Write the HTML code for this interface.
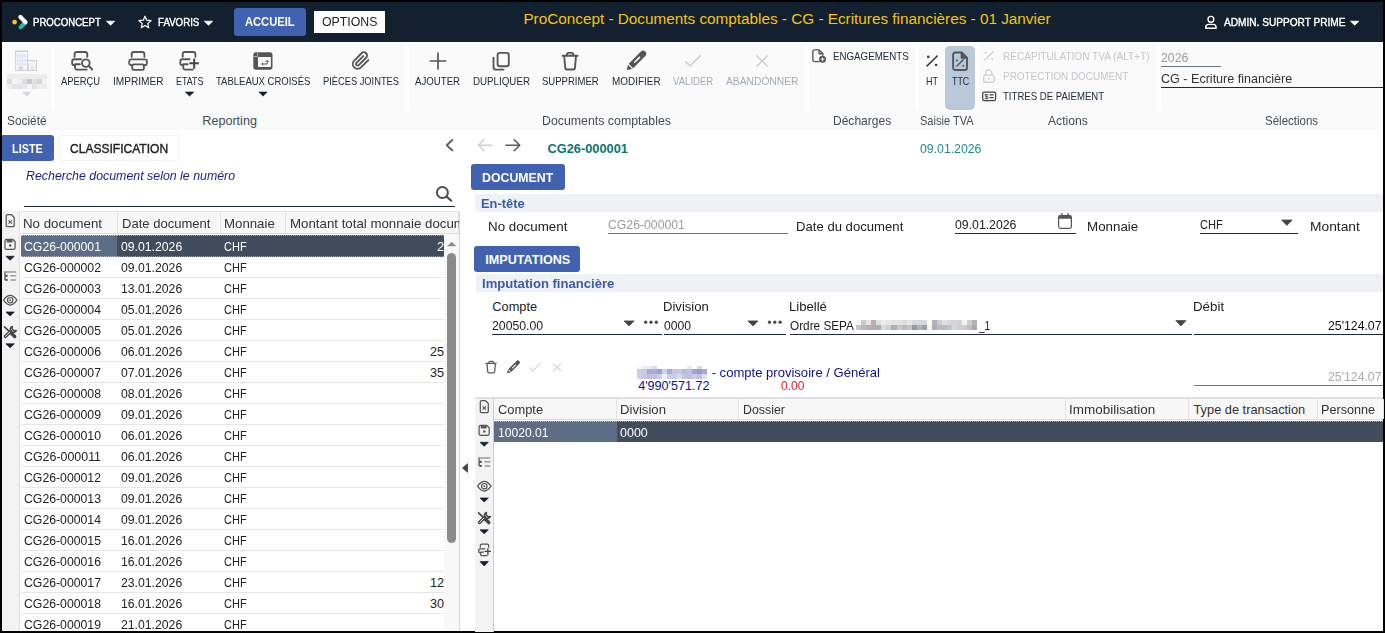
<!DOCTYPE html>
<html lang="fr"><head><meta charset="utf-8"><title>ProConcept - Documents comptables</title>
<style>
html,body{margin:0;padding:0;}
body{width:1385px;height:633px;overflow:hidden;background:#000;font-family:"Liberation Sans", sans-serif;position:relative;}
#app{position:absolute;left:2px;top:2px;width:1381px;height:629px;background:#fff;overflow:hidden;}
#abs{position:absolute;left:0;top:0;width:1385px;height:633px;overflow:hidden;}
.b{position:absolute;}
.t{position:absolute;white-space:pre;line-height:1;transform-origin:0 50%;}

.nav{background:#13202f;}
.blue{background:#4161b1;border-radius:2px;}
.rib{background:#fafafa;}
.sep{background:#fff;}
.band{background:#eef2f6;}
.ul{background:#1e2a3a;height:1px;}
.ulg{background:#6c7682;height:1px;}
.strip{background:#f3f3f3;}
.hd{background:#f7f7f7;border-right:1px solid #e2e2e2;box-sizing:border-box;}
.rl{background:#e6e6e6;height:1px;}
.sel{background:#414c5d;}
.sel1{background:#5c6d85;}
.px{position:absolute;}

</style></head><body>
<div id="app"></div>
<div id="abs">
<div class="b nav" style="left:2px;top:2px;width:1381px;height:40px;"></div>
<div class="b blue" style="left:234px;top:8px;width:72px;height:27.5px;border-radius:3px;"></div>
<div class="b " style="left:314px;top:11px;width:71px;height:22px;background:#fff;"></div>
<div class="b rib" style="left:2px;top:42px;width:1381px;height:88px;"></div>
<div class="b sep" style="left:2px;top:42px;width:1381px;height:1.5px;"></div>
<div class="b sep" style="left:51.2px;top:43px;width:3.8px;height:67px;"></div>
<div class="b sep" style="left:405.1px;top:43px;width:3.8px;height:67px;"></div>
<div class="b sep" style="left:805px;top:43px;width:3.8px;height:67px;"></div>
<div class="b sep" style="left:915px;top:43px;width:3.8px;height:67px;"></div>
<div class="b sep" style="left:975.3px;top:43px;width:3.8px;height:67px;"></div>
<div class="b sep" style="left:1156.8px;top:43px;width:3.8px;height:67px;"></div>
<div class="b " style="left:945px;top:46px;width:30px;height:64px;background:#b9c9d9;border-radius:5px;"></div>
<div class="b ulg" style="left:1161px;top:66px;width:60px;height:1px;"></div>
<div class="b ul" style="left:1161px;top:87px;width:222px;height:1px;"></div>
<div class="b blue" style="left:2px;top:135px;width:52px;height:26px;border-radius:0 3px 3px 0;"></div>
<div class="b " style="left:59px;top:135px;width:120px;height:26px;background:#fff;border:1.5px solid #f3f3f3;box-sizing:border-box;border-radius:2px;"></div>
<div class="b ul" style="left:24px;top:206px;width:430.8px;height:1px;"></div>
<div class="b strip" style="left:2px;top:211px;width:17.7px;height:420px;"></div>
<div class="b " style="left:19.7px;top:210.9px;width:440px;height:1.6px;background:#dfe3e8;"></div>
<div class="b " style="left:19.4px;top:211px;width:1px;height:420px;background:#dedede;"></div>
<div class="b " style="left:459px;top:211px;width:1px;height:420px;background:#cfd6df;"></div>
<div class="b hd" style="left:20.5px;top:212px;width:97px;height:21.5px;"></div>
<div class="b hd" style="left:117.5px;top:212px;width:103px;height:21.5px;"></div>
<div class="b hd" style="left:220.5px;top:212px;width:65px;height:21.5px;"></div>
<div class="b hd" style="left:285.5px;top:212px;width:173.5px;height:21.5px;"></div>
<div class="b " style="left:20.5px;top:233.3px;width:438.5px;height:1px;background:#dcdcdc;"></div>
<div class="b " style="left:286px;top:212px;width:173px;height:21px;overflow:hidden;"><span class="t" style="left:4.3px;top:6px;font-size:12.8px;color:#333;transform:scaleX(1.037)">Montant total monnaie document</span></div>
<div class="b sel" style="left:20.5px;top:235px;width:423.5px;height:22px;border-top:1px dotted #9aa3b0;border-bottom:1px dotted #9aa3b0;box-sizing:border-box;"></div>
<div class="b sel1" style="left:20.5px;top:235px;width:96.5px;height:22px;border-top:1px dotted #b5bcc8;border-bottom:1px dotted #b5bcc8;box-sizing:border-box;"></div>
<div class="b rl" style="left:20.5px;top:277px;width:423.5px;height:1px;"></div>
<div class="b rl" style="left:20.5px;top:298px;width:423.5px;height:1px;"></div>
<div class="b rl" style="left:20.5px;top:319px;width:423.5px;height:1px;"></div>
<div class="b rl" style="left:20.5px;top:340px;width:423.5px;height:1px;"></div>
<div class="b rl" style="left:20.5px;top:361px;width:423.5px;height:1px;"></div>
<div class="b rl" style="left:20.5px;top:382px;width:423.5px;height:1px;"></div>
<div class="b rl" style="left:20.5px;top:403px;width:423.5px;height:1px;"></div>
<div class="b rl" style="left:20.5px;top:424px;width:423.5px;height:1px;"></div>
<div class="b rl" style="left:20.5px;top:445px;width:423.5px;height:1px;"></div>
<div class="b rl" style="left:20.5px;top:466px;width:423.5px;height:1px;"></div>
<div class="b rl" style="left:20.5px;top:487px;width:423.5px;height:1px;"></div>
<div class="b rl" style="left:20.5px;top:508px;width:423.5px;height:1px;"></div>
<div class="b rl" style="left:20.5px;top:529px;width:423.5px;height:1px;"></div>
<div class="b rl" style="left:20.5px;top:550px;width:423.5px;height:1px;"></div>
<div class="b rl" style="left:20.5px;top:571px;width:423.5px;height:1px;"></div>
<div class="b rl" style="left:20.5px;top:592px;width:423.5px;height:1px;"></div>
<div class="b rl" style="left:20.5px;top:613px;width:423.5px;height:1px;"></div>
<div class="b rl" style="left:20.5px;top:634px;width:423.5px;height:1px;"></div>
<div class="b " style="left:444.2px;top:234.3px;width:14.8px;height:397px;background:#f8f8f8;"></div>
<div class="b " style="left:447.3px;top:253px;width:9px;height:290px;background:#8b8b8b;border-radius:4.5px;"></div>
<div class="b blue" style="left:471px;top:164px;width:94px;height:26px;border-radius:3px;"></div>
<div class="b band" style="left:474.5px;top:194px;width:908.5px;height:18px;"></div>
<div class="b ulg" style="left:608px;top:233px;width:180px;height:1px;"></div>
<div class="b ul" style="left:955px;top:233px;width:120.8px;height:1px;"></div>
<div class="b ul" style="left:1200px;top:233px;width:97.6px;height:1px;"></div>
<div class="b blue" style="left:474px;top:246px;width:106px;height:26px;border-radius:3px;"></div>
<div class="b band" style="left:475.5px;top:274px;width:907.5px;height:18px;"></div>
<div class="b ul" style="left:492px;top:334px;width:169.7px;height:1.2px;"></div>
<div class="b ul" style="left:664px;top:334px;width:122px;height:1.2px;"></div>
<div class="b ul" style="left:789.8px;top:334px;width:402px;height:1.2px;"></div>
<div class="b ul" style="left:1194px;top:334px;width:189px;height:1.2px;"></div>
<div class="b ulg" style="left:1194px;top:384.8px;width:189px;height:1px;"></div>
<div class="b " style="left:7px;top:74px;width:40px;height:14.700000000000001px;filter:blur(.35px);"><i class="px" style="left:0px;top:0px;width:5.2px;height:5.1px;background:#ededee"></i><i class="px" style="left:5px;top:0px;width:5.2px;height:5.1px;background:#ededee"></i><i class="px" style="left:10px;top:0px;width:5.2px;height:5.1px;background:#ededee"></i><i class="px" style="left:15px;top:0px;width:5.2px;height:5.1px;background:#ededee"></i><i class="px" style="left:20px;top:0px;width:5.2px;height:5.1px;background:#ededee"></i><i class="px" style="left:25px;top:0px;width:5.2px;height:5.1px;background:#ededee"></i><i class="px" style="left:30px;top:0px;width:5.2px;height:5.1px;background:#ededee"></i><i class="px" style="left:35px;top:0px;width:5.2px;height:5.1px;background:#ededee"></i><i class="px" style="left:0px;top:4.9px;width:5.2px;height:5.1px;background:#dcdde0"></i><i class="px" style="left:5px;top:4.9px;width:5.2px;height:5.1px;background:#f5f5f5"></i><i class="px" style="left:10px;top:4.9px;width:5.2px;height:5.1px;background:#efefef"></i><i class="px" style="left:15px;top:4.9px;width:5.2px;height:5.1px;background:#dcdde0"></i><i class="px" style="left:20px;top:4.9px;width:5.2px;height:5.1px;background:#c5c9d1"></i><i class="px" style="left:25px;top:4.9px;width:5.2px;height:5.1px;background:#dfe0e3"></i><i class="px" style="left:30px;top:4.9px;width:5.2px;height:5.1px;background:#d5d7dc"></i><i class="px" style="left:35px;top:4.9px;width:5.2px;height:5.1px;background:#f3f3f3"></i><i class="px" style="left:0px;top:9.8px;width:5.2px;height:5.1px;background:#f0f0f0"></i><i class="px" style="left:5px;top:9.8px;width:5.2px;height:5.1px;background:#e3e4e6"></i><i class="px" style="left:10px;top:9.8px;width:5.2px;height:5.1px;background:#e3e4e6"></i><i class="px" style="left:15px;top:9.8px;width:5.2px;height:5.1px;background:#e8e8ea"></i><i class="px" style="left:20px;top:9.8px;width:5.2px;height:5.1px;background:#f4f4f4"></i><i class="px" style="left:25px;top:9.8px;width:5.2px;height:5.1px;background:#e3e4e6"></i><i class="px" style="left:30px;top:9.8px;width:5.2px;height:5.1px;background:#efefef"></i><i class="px" style="left:35px;top:9.8px;width:5.2px;height:5.1px;background:#ededee"></i></div>
<div class="b " style="left:637px;top:365.9px;width:70px;height:3.2px;filter:blur(.35px);"><i class="px" style="left:0px;top:0px;width:5.2px;height:3.4px;background:#fbf5f5"></i><i class="px" style="left:5px;top:0px;width:5.2px;height:3.4px;background:#e8ecf9"></i><i class="px" style="left:10px;top:0px;width:5.2px;height:3.4px;background:#ebebf5"></i><i class="px" style="left:15px;top:0px;width:5.2px;height:3.4px;background:#ded9ea"></i><i class="px" style="left:50px;top:0px;width:5.2px;height:3.4px;background:#e6e6f2"></i><i class="px" style="left:60px;top:0px;width:5.2px;height:3.4px;background:#d8d8e8"></i></div>
<div class="b " style="left:637px;top:369.1px;width:70px;height:9.8px;filter:blur(.35px);"><i class="px" style="left:0px;top:0px;width:5.2px;height:5.1px;background:#cfcbe0"></i><i class="px" style="left:5px;top:0px;width:5.2px;height:5.1px;background:#c9cde3"></i><i class="px" style="left:10px;top:0px;width:5.2px;height:5.1px;background:#aea8d0"></i><i class="px" style="left:15px;top:0px;width:5.2px;height:5.1px;background:#a9acd5"></i><i class="px" style="left:20px;top:0px;width:5.2px;height:5.1px;background:#a7a0cc"></i><i class="px" style="left:25px;top:0px;width:5.2px;height:5.1px;background:#c9d4ee"></i><i class="px" style="left:30px;top:0px;width:5.2px;height:5.1px;background:#ada9d3"></i><i class="px" style="left:35px;top:0px;width:5.2px;height:5.1px;background:#c8c6de"></i><i class="px" style="left:40px;top:0px;width:5.2px;height:5.1px;background:#cbc7dc"></i><i class="px" style="left:45px;top:0px;width:5.2px;height:5.1px;background:#b3bfe2"></i><i class="px" style="left:50px;top:0px;width:5.2px;height:5.1px;background:#c9bdd6"></i><i class="px" style="left:55px;top:0px;width:5.2px;height:5.1px;background:#9ca5d5"></i><i class="px" style="left:60px;top:0px;width:5.2px;height:5.1px;background:#a399c8"></i><i class="px" style="left:65px;top:0px;width:5.2px;height:5.1px;background:#a3abd8"></i><i class="px" style="left:0px;top:4.9px;width:5.2px;height:5.1px;background:#d3cfe4"></i><i class="px" style="left:5px;top:4.9px;width:5.2px;height:5.1px;background:#c2c8e6"></i><i class="px" style="left:10px;top:4.9px;width:5.2px;height:5.1px;background:#c4bedd"></i><i class="px" style="left:15px;top:4.9px;width:5.2px;height:5.1px;background:#bcc2e3"></i><i class="px" style="left:20px;top:4.9px;width:5.2px;height:5.1px;background:#d4cde2"></i><i class="px" style="left:25px;top:4.9px;width:5.2px;height:5.1px;background:#eef1fb"></i><i class="px" style="left:30px;top:4.9px;width:5.2px;height:5.1px;background:#d3cbe0"></i><i class="px" style="left:35px;top:4.9px;width:5.2px;height:5.1px;background:#c5cce8"></i><i class="px" style="left:40px;top:4.9px;width:5.2px;height:5.1px;background:#dcdaea"></i><i class="px" style="left:45px;top:4.9px;width:5.2px;height:5.1px;background:#c0c7e5"></i><i class="px" style="left:50px;top:4.9px;width:5.2px;height:5.1px;background:#c3bcd9"></i><i class="px" style="left:55px;top:4.9px;width:5.2px;height:5.1px;background:#c7cbe6"></i><i class="px" style="left:60px;top:4.9px;width:5.2px;height:5.1px;background:#c8bfda"></i><i class="px" style="left:65px;top:4.9px;width:5.2px;height:5.1px;background:#dde0f1"></i></div>
<div class="b " style="left:856.2px;top:320px;width:120.96000000000001px;height:9.9px;filter:blur(.35px);"><i class="px" style="left:0px;top:0px;width:5.24px;height:5.15px;background:#fbf3ec"></i><i class="px" style="left:5.04px;top:0px;width:5.24px;height:5.15px;background:#c6cbd8"></i><i class="px" style="left:10.08px;top:0px;width:5.24px;height:5.15px;background:#e6e3e1"></i><i class="px" style="left:15.12px;top:0px;width:5.24px;height:5.15px;background:#b9adb6"></i><i class="px" style="left:20.16px;top:0px;width:5.24px;height:5.15px;background:#dde3e1"></i><i class="px" style="left:25.2px;top:0px;width:5.24px;height:5.15px;background:#e8ecf0"></i><i class="px" style="left:30.24px;top:0px;width:5.24px;height:5.15px;background:#e9e6e4"></i><i class="px" style="left:35.28px;top:0px;width:5.24px;height:5.15px;background:#e3e3e5"></i><i class="px" style="left:40.32px;top:0px;width:5.24px;height:5.15px;background:#dfe2e6"></i><i class="px" style="left:45.36px;top:0px;width:5.24px;height:5.15px;background:#dedbdc"></i><i class="px" style="left:50.4px;top:0px;width:5.24px;height:5.15px;background:#e6e5e0"></i><i class="px" style="left:55.44px;top:0px;width:5.24px;height:5.15px;background:#d3d8df"></i><i class="px" style="left:60.48px;top:0px;width:5.24px;height:5.15px;background:#ded8d7"></i><i class="px" style="left:65.52px;top:0px;width:5.24px;height:5.15px;background:#d4d9df"></i><i class="px" style="left:70.56px;top:0px;width:5.24px;height:5.15px;background:#fffaf0"></i><i class="px" style="left:75.6px;top:0px;width:5.24px;height:5.15px;background:#b1b1bb"></i><i class="px" style="left:80.64px;top:0px;width:5.24px;height:5.15px;background:#c9cdcf"></i><i class="px" style="left:85.68px;top:0px;width:5.24px;height:5.15px;background:#e0e2e8"></i><i class="px" style="left:90.72px;top:0px;width:5.24px;height:5.15px;background:#d9d7d6"></i><i class="px" style="left:95.76px;top:0px;width:5.24px;height:5.15px;background:#d6d6d8"></i><i class="px" style="left:100.8px;top:0px;width:5.24px;height:5.15px;background:#d3d3d5"></i><i class="px" style="left:105.84px;top:0px;width:5.24px;height:5.15px;background:#f4f0ec"></i><i class="px" style="left:110.88px;top:0px;width:5.24px;height:5.15px;background:#cbcdd0"></i><i class="px" style="left:115.92px;top:0px;width:5.24px;height:5.15px;background:#b9b0b3"></i><i class="px" style="left:0px;top:4.95px;width:5.24px;height:5.15px;background:#c9c6c6"></i><i class="px" style="left:5.04px;top:4.95px;width:5.24px;height:5.15px;background:#b6b8c0"></i><i class="px" style="left:10.08px;top:4.95px;width:5.24px;height:5.15px;background:#baadb0"></i><i class="px" style="left:15.12px;top:4.95px;width:5.24px;height:5.15px;background:#b1adb9"></i><i class="px" style="left:20.16px;top:4.95px;width:5.24px;height:5.15px;background:#aab1ac"></i><i class="px" style="left:25.2px;top:4.95px;width:5.24px;height:5.15px;background:#d3d9e4"></i><i class="px" style="left:30.24px;top:4.95px;width:5.24px;height:5.15px;background:#d3cfc6"></i><i class="px" style="left:35.28px;top:4.95px;width:5.24px;height:5.15px;background:#a9b0bb"></i><i class="px" style="left:40.32px;top:4.95px;width:5.24px;height:5.15px;background:#c3c9c8"></i><i class="px" style="left:45.36px;top:4.95px;width:5.24px;height:5.15px;background:#bdbbc8"></i><i class="px" style="left:50.4px;top:4.95px;width:5.24px;height:5.15px;background:#cdc3bd"></i><i class="px" style="left:55.44px;top:4.95px;width:5.24px;height:5.15px;background:#8f9cab"></i><i class="px" style="left:60.48px;top:4.95px;width:5.24px;height:5.15px;background:#bfaeaa"></i><i class="px" style="left:65.52px;top:4.95px;width:5.24px;height:5.15px;background:#95a3b1"></i><i class="px" style="left:70.56px;top:4.95px;width:5.24px;height:5.15px;background:#fdf3e8"></i><i class="px" style="left:75.6px;top:4.95px;width:5.24px;height:5.15px;background:#adadb9"></i><i class="px" style="left:80.64px;top:4.95px;width:5.24px;height:5.15px;background:#b9bdbf"></i><i class="px" style="left:85.68px;top:4.95px;width:5.24px;height:5.15px;background:#b6b9c5"></i><i class="px" style="left:90.72px;top:4.95px;width:5.24px;height:5.15px;background:#c7c5c4"></i><i class="px" style="left:95.76px;top:4.95px;width:5.24px;height:5.15px;background:#d3d7de"></i><i class="px" style="left:100.8px;top:4.95px;width:5.24px;height:5.15px;background:#cfcfd1"></i><i class="px" style="left:105.84px;top:4.95px;width:5.24px;height:5.15px;background:#d0ccc9"></i><i class="px" style="left:110.88px;top:4.95px;width:5.24px;height:5.15px;background:#bdc1c3"></i><i class="px" style="left:115.92px;top:4.95px;width:5.24px;height:5.15px;background:#b3a7a8"></i></div>
<div class="b strip" style="left:475.2px;top:397.5px;width:18.3px;height:234px;"></div>
<div class="b " style="left:475.2px;top:397.3px;width:908px;height:1.4px;background:#dde1e5;"></div>
<div class="b " style="left:493.3px;top:397.5px;width:1px;height:234px;background:#c9cdd2;"></div>
<div class="b hd" style="left:494.3px;top:398.7px;width:122.4px;height:20.6px;"></div>
<div class="b hd" style="left:616.7px;top:398.7px;width:122.8px;height:20.6px;"></div>
<div class="b hd" style="left:739.5px;top:398.7px;width:326.5px;height:20.6px;"></div>
<div class="b hd" style="left:1066px;top:398.7px;width:123px;height:20.6px;"></div>
<div class="b hd" style="left:1189px;top:398.7px;width:128.5px;height:20.6px;"></div>
<div class="b hd" style="left:1317.5px;top:398.7px;width:66px;height:20.6px;"></div>
<div class="b " style="left:494.3px;top:419.3px;width:889px;height:1px;background:#dcdcdc;"></div>
<div class="b sel" style="left:494.3px;top:421px;width:889px;height:21px;border-top:1px dotted #9aa3b0;box-sizing:border-box;"></div>
<div class="b sel1" style="left:494.3px;top:421px;width:122.4px;height:21px;border-top:1px dotted #b5bcc8;box-sizing:border-box;"></div>
<span class="t" style="top:17px;font-size:11px;color:#fff;-webkit-text-stroke:.4px #fff;left:33.00px;transform:scaleX(0.8729);">PROCONCEPT</span>
<span class="t" style="top:17px;font-size:11px;color:#fff;-webkit-text-stroke:.4px #fff;left:158.00px;transform:scaleX(0.8812);">FAVORIS</span>
<span class="t" style="top:16px;font-size:12.4px;color:#fff;font-weight:700;left:245.20px;transform:scaleX(0.9009);">ACCUEIL</span>
<span class="t" style="top:16px;font-size:12.4px;color:#222;left:321.80px;transform:scaleX(0.9946);">OPTIONS</span>
<span class="t" style="top:11px;font-size:15.3px;color:#f6c40f;left:523.40px;">ProConcept - Documents comptables - CG - Ecritures financières - 01 Janvier</span>
<span class="t" style="top:17px;font-size:11px;color:#fff;-webkit-text-stroke:.4px #fff;left:1224.00px;transform:scaleX(0.9183);">ADMIN. SUPPORT PRIME</span>
<span class="t" style="top:76px;font-size:11.2px;color:#222c3b;left:61.10px;transform:scaleX(0.8379);">APERÇU</span>
<span class="t" style="top:76px;font-size:11.2px;color:#222c3b;left:112.50px;transform:scaleX(0.9041);">IMPRIMER</span>
<span class="t" style="top:76px;font-size:11.2px;color:#222c3b;left:175.80px;transform:scaleX(0.7987);">ETATS</span>
<span class="t" style="top:76px;font-size:11.2px;color:#222c3b;left:216.10px;transform:scaleX(0.8498);">TABLEAUX CROISÉS</span>
<span class="t" style="top:76px;font-size:11.2px;color:#222c3b;left:322.70px;transform:scaleX(0.8315);">PIÈCES JOINTES</span>
<span class="t" style="top:76px;font-size:11.2px;color:#222c3b;left:415.30px;transform:scaleX(0.8632);">AJOUTER</span>
<span class="t" style="top:76px;font-size:11.2px;color:#222c3b;left:472.90px;transform:scaleX(0.8728);">DUPLIQUER</span>
<span class="t" style="top:76px;font-size:11.2px;color:#222c3b;left:542.20px;transform:scaleX(0.8520);">SUPPRIMER</span>
<span class="t" style="top:76px;font-size:11.2px;color:#222c3b;left:611.70px;transform:scaleX(0.8881);">MODIFIER</span>
<span class="t" style="top:76px;font-size:11.2px;color:#a3abb4;left:673.10px;transform:scaleX(0.8560);">VALIDER</span>
<span class="t" style="top:76px;font-size:11.2px;color:#a3abb4;left:726.20px;transform:scaleX(0.9180);">ABANDONNER</span>
<span class="t" style="top:76px;font-size:11.2px;color:#222c3b;left:925.90px;transform:scaleX(0.8024);">HT</span>
<span class="t" style="top:76px;font-size:11.2px;color:#222c3b;left:951.60px;transform:scaleX(0.7938);">TTC</span>
<span class="t" style="top:51px;font-size:11.2px;color:#222c3b;left:832.60px;transform:scaleX(0.8710);">ENGAGEMENTS</span>
<span class="t" style="top:51px;font-size:11.2px;color:#c3c8cd;left:1002.50px;transform:scaleX(0.8990);">RÉCAPITULATION TVA (ALT+T)</span>
<span class="t" style="top:71px;font-size:11.2px;color:#c3c8cd;left:1002.50px;transform:scaleX(0.8885);">PROTECTION DOCUMENT</span>
<span class="t" style="top:91px;font-size:11.2px;color:#222c3b;left:1002.50px;transform:scaleX(0.8572);">TITRES DE PAIEMENT</span>
<span class="t" style="top:51px;font-size:13.2px;color:#9a9a9a;left:1161.40px;transform:scaleX(0.9309);">2026</span>
<span class="t" style="top:72px;font-size:13.2px;color:#333;left:1161.40px;transform:scaleX(0.9524);">CG - Ecriture financière</span>
<span class="t" style="top:115px;font-size:12.6px;color:#444b55;left:6.50px;transform:scaleX(0.9404);">Société</span>
<span class="t" style="top:115px;font-size:12.6px;color:#444b55;left:202.30px;">Reporting</span>
<span class="t" style="top:115px;font-size:12.6px;color:#444b55;left:542.32px;transform:scaleX(0.9801);">Documents comptables</span>
<span class="t" style="top:115px;font-size:12.6px;color:#444b55;left:832.95px;transform:scaleX(0.9546);">Décharges</span>
<span class="t" style="top:115px;font-size:12.6px;color:#444b55;left:919.90px;transform:scaleX(0.8764);">Saisie TVA</span>
<span class="t" style="top:115px;font-size:12.6px;color:#444b55;left:1048.10px;transform:scaleX(0.9634);">Actions</span>
<span class="t" style="top:115px;font-size:12.6px;color:#444b55;left:1264.50px;transform:scaleX(0.9134);">Sélections</span>
<span class="t" style="top:143px;font-size:12.6px;color:#fff;font-weight:700;left:12.10px;transform:scaleX(0.8616);">LISTE</span>
<span class="t" style="top:143px;font-size:12.6px;color:#222;-webkit-text-stroke:.4px #222;left:70.00px;transform:scaleX(0.9558);">CLASSIFICATION</span>
<span class="t" style="top:170px;font-size:12.8px;color:#1c1c8c;font-style:italic;left:26.00px;transform:scaleX(0.9670);">Recherche document selon le numéro</span>
<span class="t" style="top:218px;font-size:12.8px;color:#333;left:23.46px;transform:scaleX(1.0376);">No document</span>
<span class="t" style="top:218px;font-size:12.8px;color:#333;left:121.58px;transform:scaleX(1.0194);">Date document</span>
<span class="t" style="top:218px;font-size:12.8px;color:#333;left:224.37px;transform:scaleX(1.0340);">Monnaie</span>
<span class="t" style="top:241px;font-size:12.6px;color:#fff;left:23.60px;transform:scaleX(0.9733);">CG26-000001</span>
<span class="t" style="top:241px;font-size:12.6px;color:#fff;left:121.40px;transform:scaleX(0.9710);">09.01.2026</span>
<span class="t" style="top:241px;font-size:12.6px;color:#fff;left:224.30px;transform:scaleX(0.8744);">CHF</span>
<span class="t" style="top:241px;font-size:12.6px;color:#fff;right:941.08px;transform-origin:100% 50%;">2</span>
<span class="t" style="top:262px;font-size:12.6px;color:#222;left:23.60px;transform:scaleX(0.9733);">CG26-000002</span>
<span class="t" style="top:262px;font-size:12.6px;color:#222;left:121.40px;transform:scaleX(0.9710);">09.01.2026</span>
<span class="t" style="top:262px;font-size:12.6px;color:#222;left:224.30px;transform:scaleX(0.8744);">CHF</span>
<span class="t" style="top:283px;font-size:12.6px;color:#222;left:23.60px;transform:scaleX(0.9733);">CG26-000003</span>
<span class="t" style="top:283px;font-size:12.6px;color:#222;left:121.40px;transform:scaleX(0.9710);">13.01.2026</span>
<span class="t" style="top:283px;font-size:12.6px;color:#222;left:224.30px;transform:scaleX(0.8744);">CHF</span>
<span class="t" style="top:304px;font-size:12.6px;color:#222;left:23.60px;transform:scaleX(0.9733);">CG26-000004</span>
<span class="t" style="top:304px;font-size:12.6px;color:#222;left:121.40px;transform:scaleX(0.9710);">05.01.2026</span>
<span class="t" style="top:304px;font-size:12.6px;color:#222;left:224.30px;transform:scaleX(0.8744);">CHF</span>
<span class="t" style="top:325px;font-size:12.6px;color:#222;left:23.60px;transform:scaleX(0.9733);">CG26-000005</span>
<span class="t" style="top:325px;font-size:12.6px;color:#222;left:121.40px;transform:scaleX(0.9710);">05.01.2026</span>
<span class="t" style="top:325px;font-size:12.6px;color:#222;left:224.30px;transform:scaleX(0.8744);">CHF</span>
<span class="t" style="top:346px;font-size:12.6px;color:#222;left:23.60px;transform:scaleX(0.9733);">CG26-000006</span>
<span class="t" style="top:346px;font-size:12.6px;color:#222;left:121.40px;transform:scaleX(0.9710);">06.01.2026</span>
<span class="t" style="top:346px;font-size:12.6px;color:#222;left:224.30px;transform:scaleX(0.8744);">CHF</span>
<span class="t" style="top:346px;font-size:12.6px;color:#222;right:940.99px;transform-origin:100% 50%;">25</span>
<span class="t" style="top:367px;font-size:12.6px;color:#222;left:23.60px;transform:scaleX(0.9733);">CG26-000007</span>
<span class="t" style="top:367px;font-size:12.6px;color:#222;left:121.40px;transform:scaleX(0.9710);">07.01.2026</span>
<span class="t" style="top:367px;font-size:12.6px;color:#222;left:224.30px;transform:scaleX(0.8744);">CHF</span>
<span class="t" style="top:367px;font-size:12.6px;color:#222;right:940.99px;transform-origin:100% 50%;">35</span>
<span class="t" style="top:388px;font-size:12.6px;color:#222;left:23.60px;transform:scaleX(0.9733);">CG26-000008</span>
<span class="t" style="top:388px;font-size:12.6px;color:#222;left:121.40px;transform:scaleX(0.9710);">08.01.2026</span>
<span class="t" style="top:388px;font-size:12.6px;color:#222;left:224.30px;transform:scaleX(0.8744);">CHF</span>
<span class="t" style="top:409px;font-size:12.6px;color:#222;left:23.60px;transform:scaleX(0.9733);">CG26-000009</span>
<span class="t" style="top:409px;font-size:12.6px;color:#222;left:121.40px;transform:scaleX(0.9710);">09.01.2026</span>
<span class="t" style="top:409px;font-size:12.6px;color:#222;left:224.30px;transform:scaleX(0.8744);">CHF</span>
<span class="t" style="top:430px;font-size:12.6px;color:#222;left:23.60px;transform:scaleX(0.9733);">CG26-000010</span>
<span class="t" style="top:430px;font-size:12.6px;color:#222;left:121.40px;transform:scaleX(0.9710);">06.01.2026</span>
<span class="t" style="top:430px;font-size:12.6px;color:#222;left:224.30px;transform:scaleX(0.8744);">CHF</span>
<span class="t" style="top:451px;font-size:12.6px;color:#222;left:23.60px;transform:scaleX(0.9849);">CG26-000011</span>
<span class="t" style="top:451px;font-size:12.6px;color:#222;left:121.40px;transform:scaleX(0.9710);">06.01.2026</span>
<span class="t" style="top:451px;font-size:12.6px;color:#222;left:224.30px;transform:scaleX(0.8744);">CHF</span>
<span class="t" style="top:472px;font-size:12.6px;color:#222;left:23.60px;transform:scaleX(0.9733);">CG26-000012</span>
<span class="t" style="top:472px;font-size:12.6px;color:#222;left:121.40px;transform:scaleX(0.9710);">09.01.2026</span>
<span class="t" style="top:472px;font-size:12.6px;color:#222;left:224.30px;transform:scaleX(0.8744);">CHF</span>
<span class="t" style="top:493px;font-size:12.6px;color:#222;left:23.60px;transform:scaleX(0.9733);">CG26-000013</span>
<span class="t" style="top:493px;font-size:12.6px;color:#222;left:121.40px;transform:scaleX(0.9710);">09.01.2026</span>
<span class="t" style="top:493px;font-size:12.6px;color:#222;left:224.30px;transform:scaleX(0.8744);">CHF</span>
<span class="t" style="top:514px;font-size:12.6px;color:#222;left:23.60px;transform:scaleX(0.9733);">CG26-000014</span>
<span class="t" style="top:514px;font-size:12.6px;color:#222;left:121.40px;transform:scaleX(0.9710);">09.01.2026</span>
<span class="t" style="top:514px;font-size:12.6px;color:#222;left:224.30px;transform:scaleX(0.8744);">CHF</span>
<span class="t" style="top:535px;font-size:12.6px;color:#222;left:23.60px;transform:scaleX(0.9733);">CG26-000015</span>
<span class="t" style="top:535px;font-size:12.6px;color:#222;left:121.40px;transform:scaleX(0.9710);">16.01.2026</span>
<span class="t" style="top:535px;font-size:12.6px;color:#222;left:224.30px;transform:scaleX(0.8744);">CHF</span>
<span class="t" style="top:556px;font-size:12.6px;color:#222;left:23.60px;transform:scaleX(0.9733);">CG26-000016</span>
<span class="t" style="top:556px;font-size:12.6px;color:#222;left:121.40px;transform:scaleX(0.9710);">16.01.2026</span>
<span class="t" style="top:556px;font-size:12.6px;color:#222;left:224.30px;transform:scaleX(0.8744);">CHF</span>
<span class="t" style="top:577px;font-size:12.6px;color:#222;left:23.60px;transform:scaleX(0.9733);">CG26-000017</span>
<span class="t" style="top:577px;font-size:12.6px;color:#222;left:121.40px;transform:scaleX(0.9710);">23.01.2026</span>
<span class="t" style="top:577px;font-size:12.6px;color:#222;left:224.30px;transform:scaleX(0.8744);">CHF</span>
<span class="t" style="top:577px;font-size:12.6px;color:#222;right:940.99px;transform-origin:100% 50%;">12</span>
<span class="t" style="top:598px;font-size:12.6px;color:#222;left:23.60px;transform:scaleX(0.9733);">CG26-000018</span>
<span class="t" style="top:598px;font-size:12.6px;color:#222;left:121.40px;transform:scaleX(0.9710);">16.01.2026</span>
<span class="t" style="top:598px;font-size:12.6px;color:#222;left:224.30px;transform:scaleX(0.8744);">CHF</span>
<span class="t" style="top:598px;font-size:12.6px;color:#222;right:940.99px;transform-origin:100% 50%;">30</span>
<span class="t" style="top:619px;font-size:12.6px;color:#222;left:23.60px;transform:scaleX(0.9733);">CG26-000019</span>
<span class="t" style="top:619px;font-size:12.6px;color:#222;left:121.40px;transform:scaleX(0.9710);">21.01.2026</span>
<span class="t" style="top:619px;font-size:12.6px;color:#222;left:224.30px;transform:scaleX(0.8744);">CHF</span>
<span class="t" style="top:143px;font-size:12.8px;color:#0a7672;font-weight:700;left:547.50px;">CG26-000001</span>
<span class="t" style="top:143px;font-size:12.6px;color:#1f8c8c;left:920.40px;transform:scaleX(0.9742);">09.01.2026</span>
<span class="t" style="top:172px;font-size:12.6px;color:#fff;font-weight:700;left:482.30px;transform:scaleX(0.9786);">DOCUMENT</span>
<span class="t" style="top:198px;font-size:12.8px;color:#3b5aa9;font-weight:700;left:480.50px;transform:scaleX(1.0057);">En-tête</span>
<span class="t" style="top:221px;font-size:12.8px;color:#222;left:488.36px;transform:scaleX(1.0429);">No document</span>
<span class="t" style="top:219px;font-size:12.6px;color:#9c9c9c;left:608.30px;transform:scaleX(0.9720);">CG26-000001</span>
<span class="t" style="top:221px;font-size:12.8px;color:#222;left:795.57px;transform:scaleX(1.0258);">Date du document</span>
<span class="t" style="top:219px;font-size:12.6px;color:#222;left:955.10px;transform:scaleX(0.9742);">09.01.2026</span>
<span class="t" style="top:221px;font-size:12.8px;color:#222;left:1087.46px;transform:scaleX(1.0444);">Monnaie</span>
<span class="t" style="top:219px;font-size:12.6px;color:#222;left:1200.30px;transform:scaleX(0.8820);">CHF</span>
<span class="t" style="top:221px;font-size:12.8px;color:#222;left:1310.02px;transform:scaleX(1.0770);">Montant</span>
<span class="t" style="top:254px;font-size:12.6px;color:#fff;font-weight:700;left:485.30px;">IMPUTATIONS</span>
<span class="t" style="top:278px;font-size:12.8px;color:#3b5aa9;font-weight:700;left:481.50px;transform:scaleX(1.0225);">Imputation financière</span>
<span class="t" style="top:301px;font-size:12.8px;color:#222;left:492.30px;">Compte</span>
<span class="t" style="top:301px;font-size:12.8px;color:#222;left:663.18px;transform:scaleX(1.0232);">Division</span>
<span class="t" style="top:301px;font-size:12.8px;color:#222;left:789.08px;transform:scaleX(1.0228);">Libellé</span>
<span class="t" style="top:301px;font-size:12.8px;color:#222;left:1193.36px;transform:scaleX(1.0403);">Débit</span>
<span class="t" style="top:320px;font-size:12.6px;color:#222;left:492.30px;transform:scaleX(0.9729);">20050.00</span>
<span class="t" style="top:320px;font-size:12.6px;color:#222;left:664.20px;transform:scaleX(0.9639);">0000</span>
<span class="t" style="top:320px;font-size:12.6px;color:#222;left:790.10px;transform:scaleX(0.9354);">Ordre SEPA</span>
<span class="t" style="top:320px;font-size:12.6px;color:#222;left:978.69px;transform:scaleX(0.7931);">_1</span>
<span class="t" style="top:320px;font-size:12.6px;color:#111;left:1327.70px;transform:scaleX(0.9740);">25&#x27;124.07</span>
<span class="t" style="top:371px;font-size:12.6px;color:#ababab;left:1327.70px;transform:scaleX(0.9740);">25&#x27;124.07</span>
<span class="t" style="top:367px;font-size:12.8px;color:#12128a;left:707.50px;transform:scaleX(1.0202);"> - compte provisoire / Général</span>
<span class="t" style="top:380px;font-size:12.6px;color:#12128a;left:638.20px;">4&#x27;990&#x27;571.72</span>
<span class="t" style="top:380px;font-size:12.6px;color:#f3161e;left:781.00px;transform:scaleX(0.9548);">0.00</span>
<span class="t" style="top:404px;font-size:12.8px;color:#333;left:498.40px;transform:scaleX(1.0069);">Compte</span>
<span class="t" style="top:404px;font-size:12.8px;color:#333;left:620.17px;transform:scaleX(1.0255);">Division</span>
<span class="t" style="top:404px;font-size:12.8px;color:#333;left:743.33px;transform:scaleX(0.9672);">Dossier</span>
<span class="t" style="top:404px;font-size:12.8px;color:#333;left:1069.45px;transform:scaleX(1.0537);">Immobilisation</span>
<span class="t" style="top:404px;font-size:12.8px;color:#333;left:1193.50px;">Type de transaction</span>
<span class="t" style="top:404px;font-size:12.8px;color:#333;left:1321.01px;transform:scaleX(0.9876);">Personne</span>
<span class="t" style="top:427px;font-size:12.6px;color:#fff;left:498.40px;transform:scaleX(0.9634);">10020.01</span>
<span class="t" style="top:427px;font-size:12.6px;color:#fff;left:620.00px;transform:scaleX(0.9924);">0000</span>
<svg class="b" style="left:0;top:0" width="1385" height="633" viewBox="0 0 1385 633">
<circle cx="14.6" cy="22.1" r="2.4" fill="#f8c617"/>
<path d="M25.1 22.8L20.6 27.3" stroke="#27b7ac" stroke-width="4.2" stroke-linecap="round"/>
<path d="M20.4 17.1L25.5 22.2" stroke="#fff" stroke-width="4.2" stroke-linecap="round"/>
<path d="M106.4 21.2H114.8L110.6 25.2Z" fill="#fff" stroke="#fff" stroke-width=".7" stroke-linejoin="round"/>
<path d="M204.3 21.2H212.7L208.5 25.2Z" fill="#fff" stroke="#fff" stroke-width=".7" stroke-linejoin="round"/>
<path d="M1350.5 21.2H1358.9L1354.7 25.2Z" fill="#fff" stroke="#fff" stroke-width=".7" stroke-linejoin="round"/>
<path d="M145.00 16.20L146.73 20.21L151.09 20.62L147.81 23.51L148.76 27.78L145.00 25.55L141.24 27.78L142.19 23.51L138.91 20.62L143.27 20.21Z" fill="none" stroke="#fff" stroke-width="1.2" stroke-linejoin="round"/>
<g fill="none" stroke="#fff" stroke-width="1.4"><circle cx="1210.9" cy="19.3" r="2.9"/><path d="M1205.7 28.3v-.9a3 3 0 0 1 3-3h4.4a3 3 0 0 1 3 3v.9z" stroke-linejoin="round"/></g>
<rect x="15.4" y="51.2" width="12.2" height="19.3" fill="#eceffb" stroke="#c9d0ee" stroke-width=".9"/><path d="M15 51.3h13" stroke="#c8c8c8" stroke-width="1.1"/><path d="M16 52.9h11M16 58.3h11M16 62.2h11M16 66.2h11" stroke="#fff" stroke-width="1.3"/><path d="M17.8 53.5v12.5M20.2 53.5v12.5M22.7 53.5v12.5M25.2 53.5v12.5" stroke="#d9def5" stroke-width=".9"/><rect x="18.6" y="66.3" width="4.4" height="4.2" fill="#d9d9dc"/><rect x="28" y="60.6" width="8.5" height="9.9" fill="#f1f1f1" stroke="#cacaca" stroke-width="1"/><path d="M28 62.5h8.5" stroke="#fff" stroke-width="1.2"/><rect x="30.4" y="66.6" width="3.4" height="3.9" fill="#dfe3f0"/><path d="M15 70.6h22" stroke="#d6d6d6" stroke-width=".8"/>
<path d="M22.7 92.2H30.7L26.7 96Z" fill="#d6d6d6" stroke="#d6d6d6" stroke-width=".7" stroke-linejoin="round"/>
<path d="M185.4 92.1H193.7L189.55 96.1Z" fill="#16202e" stroke="#16202e" stroke-width=".7" stroke-linejoin="round"/>
<path d="M258.9 92.1H267.2L263.04999999999995 96.1Z" fill="#16202e" stroke="#16202e" stroke-width=".7" stroke-linejoin="round"/>
<g fill="none" stroke="#555" stroke-width="1.85" stroke-linejoin="round" stroke-linecap="round">
<path d="M74.55 56.7V54.2a2.2 2.2 0 0 1 2.2-2.2h8.3a2.2 2.2 0 0 1 2.2 2.2V56.7"/>
<path d="M75.10 65.1h-1a1.9 1.9 0 0 1-1.9-1.9v-2a1.9 1.9 0 0 1 1.9-1.9h7"/>
<path d="M79.90 64.2H75.10v3.5a1.9 1.9 0 0 0 1.9 1.9H86.70"/>
<circle cx="85.85" cy="63.1" r="3.8"/><path d="M88.7 66L92.2 69.5"/>
<path d="M131.70 56.7V54.2a2.2 2.2 0 0 1 2.2-2.2h8.3a2.2 2.2 0 0 1 2.2 2.2V56.7"/>
<path d="M132.25 65.2h-1.1a1.9 1.9 0 0 1-1.9-1.9v-2a1.9 1.9 0 0 1 1.9-1.9h13.8a1.9 1.9 0 0 1 1.9 1.9v2a1.9 1.9 0 0 1-1.9 1.9h-1.1"/>
<rect x="132.25" y="64.3" width="11.6" height="5.6" rx="1.3"/>
<path d="M182.70 56.7V54.2a2.2 2.2 0 0 1 2.2-2.2h8.3a2.2 2.2 0 0 1 2.2 2.2V56.7"/>
<path d="M183.25 65.1h-1a1.9 1.9 0 0 1-1.9-1.9v-2a1.9 1.9 0 0 1 1.9-1.9h7.4"/>
<path d="M187.65 64.2H183.25v3.5a1.9 1.9 0 0 0 1.9 1.9H192.85"/>
<path d="M189.3 63.2H198.8M194.2 58.5V68.8" stroke="#444" stroke-width="2" stroke-linecap="butt"/>
<path transform="translate(351.2 51.2) scale(.8)" stroke-width="2.35" d="M21.44 11.05l-9.19 9.19a6 6 0 0 1-8.49-8.49l9.19-9.19a4 4 0 0 1 5.66 5.66l-9.2 9.19a2 2 0 0 1-2.83-2.83l8.49-8.48"/>
<path d="M430.3 61h15.5M438 53.2v15.7" stroke-width="1.7"/>
<rect x="497.6" y="52.8" width="11.2" height="13.4" rx="2.3"/><path d="M493.5 57.6V67.3a2.3 2.3 0 0 0 2.3 2.3H503.6"/>
<path d="M562.6 55.7H577.6M566.9 55.7V54.5a1.7 1.7 0 0 1 1.7-1.7h3a1.7 1.7 0 0 1 1.7 1.7V55.7M564.2 55.9l1 11.8a2 2 0 0 0 2 1.8h5.8a2 2 0 0 0 2-1.8l1-11.8"/>
</g>
<rect x="253.3" y="52.3" width="19.2" height="17.4" rx="2.6" fill="#555"/><rect x="258" y="56.9" width="12.9" height="10.2" rx=".8" fill="#fafafa"/><path d="M257.6 52.4v4.6M253.4 56.6h4.6" stroke="#b5b5b5" stroke-width=".9"/><path d="M261.8 64h5.4v-3.4M265.7 61.8l1.5-1.6 1.5 1.6M263.2 62.6l-1.5 1.4 1.5 1.4" fill="none" stroke="#555" stroke-width="1"/>
<g transform="translate(636.3 60.6) rotate(-45) scale(1.0)"><path d="M-13.4 0l4.6-3v6z" fill="#555"/><path d="M-7.6 -3.1H9.6a3.1 3.1 0 0 1 0 6.2H-7.6z" fill="#555"/><rect x="-3.2" y="-.8" width="8.6" height="1.6" rx=".8" fill="#fafafa"/></g>
<path d="M685.3 61.3l4.8 4.6 10.8-10.7M756.5 55.5l11.3 11M767.8 55.5l-11.3 11" fill="none" stroke="#cdd1d5" stroke-width="1.6"/>
<g fill="none" stroke="#555" stroke-width="1.35" stroke-linejoin="round"><path d="M819.5 61.6H814.7a1.9 1.9 0 0 1-1.9-1.9V51.8a1.9 1.9 0 0 1 1.9-1.9h4.4l3.7 3.7v2.2"/><path d="M819 50.2v3.5h3.5"/></g><circle cx="822.5" cy="59.3" r="3.5" fill="#555"/><path d="M820.6 59.3h3.8M822.5 57.4v3.8" stroke="#fafafa" stroke-width="1.1"/>
<path d="M926.6 66.3L937.6 55.7" stroke="#444" stroke-width="1.6"/><circle cx="928.3" cy="56.9" r="1.35" fill="#444"/><circle cx="936.1" cy="65" r="1.35" fill="#444"/>
<g fill="none" stroke="#555" stroke-width="1.9" stroke-linejoin="round"><path d="M953.1 54.7a2.2 2.2 0 0 1 2.2-2.2h6.4l5.3 5.3v10a2.2 2.2 0 0 1-2.2 2.2h-9.5a2.2 2.2 0 0 1-2.2-2.2z"/><path d="M961.6 52.6v5.2h5.2z" fill="#555"/><path d="M956.4 66.6L963.8 59.3" stroke-width="1.4"/></g><circle cx="957" cy="60.5" r="1.05" fill="#555"/><circle cx="963.3" cy="65.8" r="1.05" fill="#555"/>
<path d="M984.3 60.3L993.5 51.6" stroke="#cdd1d5" stroke-width="1.4"/><circle cx="985.7" cy="52.7" r="1.15" fill="#cdd1d5"/><circle cx="992.2" cy="59.3" r="1.15" fill="#cdd1d5"/>
<g fill="none" stroke="#cdd1d5" stroke-width="1.4"><rect x="983.7" y="75.1" width="10.4" height="7.2" rx="1.6"/><path d="M985.9 75v-2a3 3 0 0 1 6 0v2"/></g><circle cx="988.9" cy="78.7" r=".95" fill="#cdd1d5"/>
<rect x="982.7" y="92" width="12.9" height="8.5" rx="1.6" fill="none" stroke="#444" stroke-width="1.25"/><path d="M989.6 94.9h4M989.6 97.6h4" stroke="#444" stroke-width="1.1"/><text x="984.4" y="98.9" font-family="Liberation Sans, sans-serif" font-size="7" font-weight="700" fill="#444">$</text>
<g fill="none" stroke-width="1.6" stroke-linecap="round" stroke-linejoin="round"><path d="M452.3 140l-5.6 5.2 5.6 5.2" stroke="#5e5e5e" stroke-width="1.9"/><path d="M491.8 145.2H478.5M484 139.7l-5.6 5.5 5.6 5.5" stroke="#d2d2d2"/><path d="M505.9 145.2H519.7M514.2 139.7l5.6 5.5-5.6 5.5" stroke="#5c5c5c" stroke-width="1.5"/></g>
<circle cx="442.4" cy="192.5" r="5.5" fill="none" stroke="#4d4d4d" stroke-width="2"/><path d="M446.6 196.6l4.7 4.1" stroke="#4d4d4d" stroke-width="2.1" stroke-linecap="round"/>
<rect x="1058.6" y="215.5" width="12.8" height="12.9" rx="1.8" fill="none" stroke="#555" stroke-width="1.2"/><path d="M1058.6 218.8v-1.6a1.8 1.8 0 0 1 1.8-1.8h9.2a1.8 1.8 0 0 1 1.8 1.8v1.6z" fill="#555"/><path d="M1062 213v2.4M1068 213v2.4" stroke="#555" stroke-width="1.3"/>
<path d="M1281.6 220H1292.2L1286.9 225.4Z" fill="#444" stroke="#444" stroke-width=".7" stroke-linejoin="round"/>
<path d="M624 320.9H634.2L629.1 326Z" fill="#444" stroke="#444" stroke-width=".7" stroke-linejoin="round"/>
<path d="M747.8 320.9H758L752.9 326Z" fill="#444" stroke="#444" stroke-width=".7" stroke-linejoin="round"/>
<path d="M1175.8 320.6H1186L1180.9 326Z" fill="#444" stroke="#444" stroke-width=".7" stroke-linejoin="round"/>
<circle cx="645.7" cy="322.2" r="1.6" fill="#444"/>
<circle cx="651" cy="322.2" r="1.6" fill="#444"/>
<circle cx="656.3" cy="322.2" r="1.6" fill="#444"/>
<circle cx="769.5" cy="322.2" r="1.6" fill="#444"/>
<circle cx="774.8" cy="322.2" r="1.6" fill="#444"/>
<circle cx="780.1" cy="322.2" r="1.6" fill="#444"/>
<g fill="none" stroke="#595959" stroke-width="1.25" stroke-linejoin="round" stroke-linecap="round"><path d="M485.9 363.3H496.3M488.9 363.3V362.4a1.1 1.1 0 0 1 1.1-1.1h2.4a1.1 1.1 0 0 1 1.1 1.1V363.3M487 363.5l.7 8a1.4 1.4 0 0 0 1.4 1.3h4.2a1.4 1.4 0 0 0 1.4-1.3l.7-8"/></g>
<g transform="translate(513.4 366.9) rotate(-45) scale(0.66)"><path d="M-13.4 0l4.6-3v6z" fill="#555"/><path d="M-7.6 -3.1H9.6a3.1 3.1 0 0 1 0 6.2H-7.6z" fill="#555"/><rect x="-3.2" y="-.8" width="8.6" height="1.6" rx=".8" fill="#fafafa"/></g>
<path d="M529.2 367.6l3.6 3.4 7.8-7.8M553 363.7l8 7.3M561 363.7l-8 7.3" fill="none" stroke="#d3d5d7" stroke-width="1.15"/>
<path d="M447.1 246.3H456.3L451.7 241.8Z" fill="#8a8a8a"/>
<path d="M467.9 463V472.9L462 467.9Z" fill="#4b3f38"/>
<g transform="translate(0 0)">
<g fill="none" stroke="#555" stroke-width="1.25" stroke-linejoin="round"><path d="M6.2 215.9a1.4 1.4 0 0 1 1.4-1.4h3.6l3 3v7.8a1.4 1.4 0 0 1-1.4 1.4H7.6a1.4 1.4 0 0 1-1.4-1.4z"/><path d="M8.5 220.3l3.4 3.4M11.9 220.3l-3.4 3.4" stroke-width="1.1"/><path d="M5 241a1.7 1.7 0 0 1 1.7-1.7h6l2.4 2.4v6a1.7 1.7 0 0 1-1.7 1.7H6.7a1.7 1.7 0 0 1-1.7-1.7z"/><path d="M7.3 239.8v2h4.6v-2" fill="#555"/><path d="M5 271.4v8.6M5 275.8h2.2M5 279.9h2.2" stroke-width="1.3"/><path d="M4.4 272h11.8M10.4 275.8h5.8M10.4 279.9h5.8" stroke="#9a9a9a" stroke-width="1.5"/><path d="M3.5 300.2q6.7-9.6 13.4 0q-6.7 9.6-13.4 0z"/><circle cx="10.2" cy="300.2" r="2.7" stroke-width="1.2"/></g>
<circle cx="10.2" cy="245.6" r="1.25" fill="#555"/><rect x="5.6" y="274.8" width="2" height="2" fill="#555"/><rect x="5.6" y="278.9" width="2" height="2" fill="#555"/><circle cx="10.2" cy="300.2" r=".9" fill="#555"/>
<path d="M4.5 326.9L10 332.1" stroke="#444" stroke-width="1.7" stroke-linecap="round"/><path d="M11 333.1L14.7 336.6" stroke="#444" stroke-width="3.4" stroke-linecap="round"/><path d="M5.3 336.5L10.6 331.3" stroke="#444" stroke-width="3.2" stroke-linecap="round"/><path d="M5.5 336.3L10 331.9" stroke="#f3f3f3" stroke-width="1" stroke-linecap="round"/><path d="M12.3 326.4a3.1 3.1 0 1 0 4 4l-2.4.3-1.9-1.9z" fill="none" stroke="#444" stroke-width="1.5" stroke-linejoin="round"/>
<path d="M5.9 256.3H14.3L10.100000000000001 260.3Z" fill="#16202e" stroke="#16202e" stroke-width=".7" stroke-linejoin="round"/>
<path d="M5.9 312H14.3L10.100000000000001 316Z" fill="#16202e" stroke="#16202e" stroke-width=".7" stroke-linejoin="round"/>
<path d="M5.9 343.8H14.3L10.100000000000001 347.8Z" fill="#16202e" stroke="#16202e" stroke-width=".7" stroke-linejoin="round"/>
</g>
<g transform="translate(474.1 186)">
<g fill="none" stroke="#555" stroke-width="1.25" stroke-linejoin="round"><path d="M6.2 215.9a1.4 1.4 0 0 1 1.4-1.4h3.6l3 3v7.8a1.4 1.4 0 0 1-1.4 1.4H7.6a1.4 1.4 0 0 1-1.4-1.4z"/><path d="M8.5 220.3l3.4 3.4M11.9 220.3l-3.4 3.4" stroke-width="1.1"/><path d="M5 241a1.7 1.7 0 0 1 1.7-1.7h6l2.4 2.4v6a1.7 1.7 0 0 1-1.7 1.7H6.7a1.7 1.7 0 0 1-1.7-1.7z"/><path d="M7.3 239.8v2h4.6v-2" fill="#555"/><path d="M5 271.4v8.6M5 275.8h2.2M5 279.9h2.2" stroke-width="1.3"/><path d="M4.4 272h11.8M10.4 275.8h5.8M10.4 279.9h5.8" stroke="#9a9a9a" stroke-width="1.5"/><path d="M3.5 300.2q6.7-9.6 13.4 0q-6.7 9.6-13.4 0z"/><circle cx="10.2" cy="300.2" r="2.7" stroke-width="1.2"/></g>
<circle cx="10.2" cy="245.6" r="1.25" fill="#555"/><rect x="5.6" y="274.8" width="2" height="2" fill="#555"/><rect x="5.6" y="278.9" width="2" height="2" fill="#555"/><circle cx="10.2" cy="300.2" r=".9" fill="#555"/>
<path d="M4.5 326.9L10 332.1" stroke="#444" stroke-width="1.7" stroke-linecap="round"/><path d="M11 333.1L14.7 336.6" stroke="#444" stroke-width="3.4" stroke-linecap="round"/><path d="M5.3 336.5L10.6 331.3" stroke="#444" stroke-width="3.2" stroke-linecap="round"/><path d="M5.5 336.3L10 331.9" stroke="#f3f3f3" stroke-width="1" stroke-linecap="round"/><path d="M12.3 326.4a3.1 3.1 0 1 0 4 4l-2.4.3-1.9-1.9z" fill="none" stroke="#444" stroke-width="1.5" stroke-linejoin="round"/>
<path d="M5.9 256.3H14.3L10.100000000000001 260.3Z" fill="#16202e" stroke="#16202e" stroke-width=".7" stroke-linejoin="round"/>
<path d="M5.9 312H14.3L10.100000000000001 316Z" fill="#16202e" stroke="#16202e" stroke-width=".7" stroke-linejoin="round"/>
<path d="M5.9 343.8H14.3L10.100000000000001 347.8Z" fill="#16202e" stroke="#16202e" stroke-width=".7" stroke-linejoin="round"/>
<g transform="translate(10.3 364.1) scale(.66) translate(-188.9 -61.2)" fill="none" stroke="#555" stroke-width="1.9" stroke-linejoin="round" stroke-linecap="round">
<path d="M182.70 56.7V54.2a2.2 2.2 0 0 1 2.2-2.2h8.3a2.2 2.2 0 0 1 2.2 2.2V56.7"/>
<path d="M183.25 65.1h-1a1.9 1.9 0 0 1-1.9-1.9v-2a1.9 1.9 0 0 1 1.9-1.9h7.4"/>
<path d="M187.65 64.2H183.25v3.5a1.9 1.9 0 0 0 1.9 1.9H192.85"/>
<path d="M189.3 63.2H198.8M194.2 58.5V68.8" stroke="#444" stroke-width="2" stroke-linecap="butt"/>
</g>
<path d="M5.9 375.6H14.3L10.100000000000001 380Z" fill="#16202e" stroke="#16202e" stroke-width=".7" stroke-linejoin="round"/>
</g>
</svg>
</div>
</body></html>
